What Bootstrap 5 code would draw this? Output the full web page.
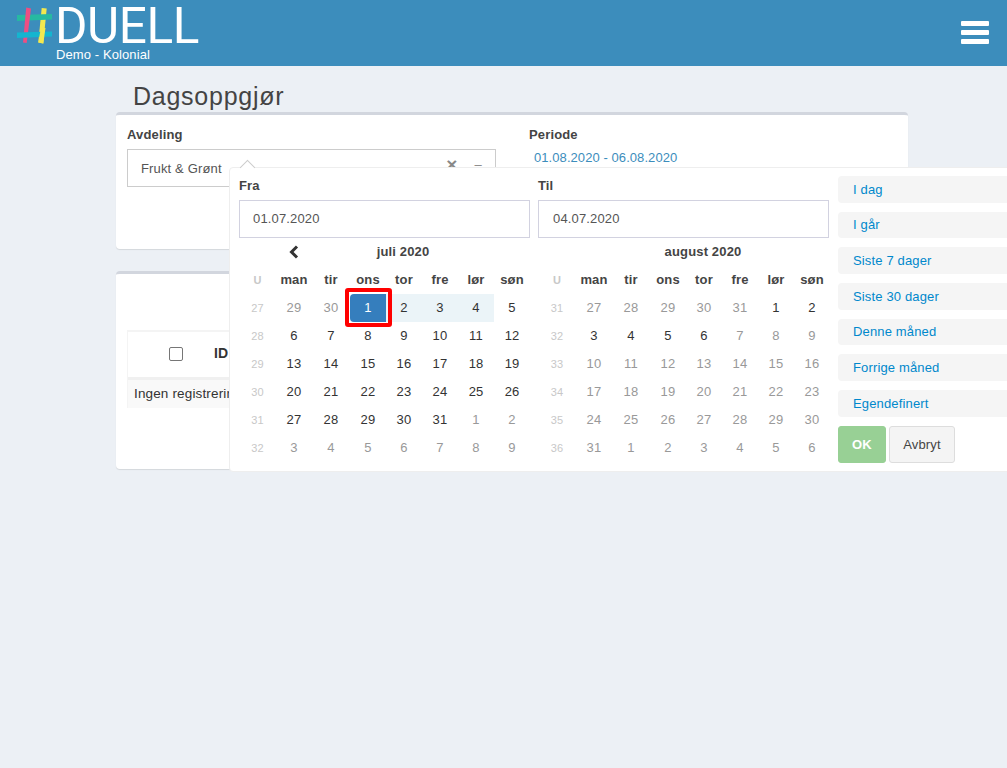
<!DOCTYPE html>
<html lang="no">
<head>
<meta charset="utf-8">
<title>Dagsoppgjør</title>
<link rel="stylesheet" href="https://cdn.jsdelivr.net/npm/bootstrap@5.3.0/dist/css/bootstrap.min.css">
<style>
html,body{height:100%;}
body{background:#ecf0f5;font-family:"Liberation Sans",Arial,sans-serif;font-size:13px;letter-spacing:.15px;color:#333;overflow:hidden;}
.topbar{height:66px;background:#3c8dbc;padding:0 18px 0 16px;position:relative;}
.brand{position:relative;width:200px;height:66px;color:#fff;}
.brand-mark{display:block;position:absolute;left:0;top:6px;}
.brand-name{position:absolute;left:39px;top:5px;font-family:Roboto,sans-serif;font-weight:400;font-size:49.5px;line-height:42px;letter-spacing:-.4px;}
.brand-sub{position:absolute;left:40px;top:47px;font-size:13px;line-height:16px;letter-spacing:.1px;font-weight:400;}
.burger{display:flex;flex-direction:column;gap:4px;width:28px;margin-bottom:2px;}
.burger span{display:block;height:5px;background:#fff;border-radius:1px;}
.pagewrap{width:792px;margin-left:116px;position:relative;}
.pagetitle{font-size:25px;line-height:30px;letter-spacing:.75px;margin:0;padding:15px 0 1px 17px;color:#444;font-weight:400;}
.boxcard{border:0;border-top:3px solid #d2d6de;border-radius:4px;background:#fff;box-shadow:0 1px 1px rgba(0,0,0,.1);}
.box-one{height:137px;margin-bottom:22px;padding:11px;}
.box-two{height:198px;padding:56px 11px 0;}
.fieldlabel{font-weight:700;line-height:18px;margin:0 0 5px;color:#444;}
.col-dept{width:369px;margin-right:33px;}
.fakeselect{height:38px;border:1px solid #ccc;padding:1px 13px 0;color:#555;}
.sel-x{font-weight:700;color:#888;font-size:19px;line-height:16px;margin-left:auto;margin-right:17px;margin-bottom:7px;}
.sel-dash{color:#888;margin-right:0;line-height:14px;margin-bottom:7px;}
.periodval{color:#3c8dbc;padding-left:5px;line-height:18px;letter-spacing:.07px;}
.regtable{width:100%;border-top:2px solid #f4f4f4;border-left:1px solid #f4f4f4;}
.reghead{height:48px;border-bottom:3px solid #f0f0f0;padding-left:41px;padding-bottom:2px;gap:31px;}
.reghead .form-check-input{width:14px;height:14px;margin:0;border-color:#767676;border-radius:2px;}
.reghead strong{font-size:14px;color:#333;}
.regrow{height:28px;background:#f9f9f9;padding-left:6px;font-size:13.5px;}
.picker{position:absolute;left:113px;top:101px;width:800px;height:305px;background:#fff;border:1px solid #eee;border-radius:4px;padding:0 0 0 9px;gap:8px;}
.picker::before{content:"";position:absolute;left:12px;top:-6px;width:11px;height:11px;background:#fff;border-left:1px solid #ccc;border-top:1px solid #ccc;transform:rotate(45deg);}
.calpane{width:291px;flex:none;}
.callabel{font-weight:700;line-height:16px;padding-top:10px;height:32px;margin:0;color:#444;}
.calinput.form-control{height:38px;width:291px;border:1px solid #d2d2e0;border-radius:0;padding:0 13px 2px;font-size:13px;letter-spacing:.15px;color:#555;}
.pane-two .calinput.form-control{padding-left:14px;}
.caltable{table-layout:fixed;width:291px;border-collapse:collapse;}
.pane-two .caltable{width:292px;}
.caltable td,.caltable th{height:28px;padding:0;text-align:center;font-weight:400;color:#333;}
.caltable .w1{width:37px;}.caltable .w2{width:36px;}.caltable .w3{width:38px;}
.pane-two .caltable .w1{width:38px;}
.caltable th{font-weight:700;color:#444;}
.caltable .wk{color:#c8c8c8;font-size:11px;}
.caltable th.wk{font-weight:700;}
.caltable .off{color:#999;}
.caltable .inrange{background:#ebf4f8;}
.caltable .active-day{background:#357ebd;color:#fff;border-radius:4px 0 0 4px;position:relative;}
.redmark{position:absolute;left:-5px;right:-6px;top:-6px;bottom:-5px;border:4px solid #f00;border-radius:3px;pointer-events:none;}
.prevbtn{display:block;margin:0 auto;}
.rangelist{width:220px;flex:none;margin-left:1px;padding-top:8px;}
.rangeitem{height:26.7px;margin-bottom:9px;background:#f5f5f5;border-radius:4px;color:#08c;padding-left:15px;display:flex;align-items:center;}
.rangebtns{gap:3px;margin-top:0;}
.okbtn.btn,.nobtn.btn{height:37px;font-size:13px;padding:0;border-radius:3px;letter-spacing:.15px;}
.okbtn.btn{width:48px;background:#98d095;border:1px solid #98d095;color:#fff;opacity:1;font-weight:700;}
.nobtn.btn{width:66px;background:#f4f4f4;border:1px solid #ddd;color:#444;}
</style>
</head>
<body>
<header class="topbar d-flex align-items-center justify-content-between">
  <div class="brand">
    <svg class="brand-mark" width="38" height="40" viewBox="0 0 38 40" aria-hidden="true">
      <polygon points="25.700,2 30.700,2.500 27.300,37.500 22.300,36.500" fill="#f3e84f"/>
      <polygon points="1,9 36,8 36,13.500 1,15" fill="#27b9a1"/>
      <polygon points="10.200,1.500 15,2.500 10.700,37 7,36.500" fill="#ec4f83"/>
      <polygon points="1,26.500 36,25.500 36,30.500 1,32" fill="#14b5cf"/>
      <polygon points="24.900,22 29.500,22 27.300,37.500 22.300,36.500" fill="#f3e84f"/>
    </svg>
    <div class="brand-name">DUELL</div>
    <div class="brand-sub">Demo - Kolonial</div>
  </div>
  <div class="burger"><span></span><span></span><span></span></div>
</header>

<main class="pagewrap">
  <h1 class="pagetitle">Dagsoppgjør</h1>
  <section class="card boxcard box-one">
    <div class="d-flex">
      <div class="col-dept">
        <div class="fieldlabel">Avdeling</div>
        <div class="fakeselect d-flex align-items-center"><span>Frukt &amp; Grønt</span><span class="sel-x">×</span><span class="sel-dash">–</span></div>
      </div>
      <div>
        <div class="fieldlabel">Periode</div>
        <div class="periodval">01.08.2020 - 06.08.2020</div>
      </div>
    </div>
  </section>
  <section class="card boxcard box-two">
    <div class="regtable">
      <div class="reghead d-flex align-items-center"><input class="form-check-input" type="checkbox" aria-label="Velg alle"><strong>ID</strong></div>
      <div class="regrow d-flex align-items-center">Ingen registreringer</div>
    </div>
  </section>

  <div class="picker d-flex">
    <div class="calpane">
      <div class="callabel">Fra</div>
      <input class="form-control calinput" value="01.07.2020" aria-label="Fra">
      <table class="caltable">
        <colgroup><col class="w1"><col class="w2"><col class="w3"><col class="w2"><col class="w2"><col class="w2"><col class="w2"><col class="w2"></colgroup>
        <tr><th></th><th><svg class="prevbtn" width="10" height="14" viewBox="0 0 10 14"><polyline points="8,1.500 2.500,7 8,12.500" fill="none" stroke="#333" stroke-width="3"/></svg></th><th colspan="5">juli 2020</th><th></th></tr>
        <tr><th class="wk">U</th><th>man</th><th>tir</th><th>ons</th><th>tor</th><th>fre</th><th>lør</th><th>søn</th></tr>
        <tr><td class="wk">27</td><td class="off">29</td><td class="off">30</td><td class="active-day">1<span class="redmark"></span></td><td class="inrange">2</td><td class="inrange">3</td><td class="inrange">4</td><td>5</td></tr>
        <tr><td class="wk">28</td><td>6</td><td>7</td><td>8</td><td>9</td><td>10</td><td>11</td><td>12</td></tr>
        <tr><td class="wk">29</td><td>13</td><td>14</td><td>15</td><td>16</td><td>17</td><td>18</td><td>19</td></tr>
        <tr><td class="wk">30</td><td>20</td><td>21</td><td>22</td><td>23</td><td>24</td><td>25</td><td>26</td></tr>
        <tr><td class="wk">31</td><td>27</td><td>28</td><td>29</td><td>30</td><td>31</td><td class="off">1</td><td class="off">2</td></tr>
        <tr><td class="wk">32</td><td class="off">3</td><td class="off">4</td><td class="off">5</td><td class="off">6</td><td class="off">7</td><td class="off">8</td><td class="off">9</td></tr>
      </table>
    </div>
    <div class="calpane pane-two">
      <div class="callabel">Til</div>
      <input class="form-control calinput" value="04.07.2020" aria-label="Til">
      <table class="caltable">
        <colgroup><col class="w1"><col class="w2"><col class="w3"><col class="w2"><col class="w2"><col class="w2"><col class="w2"><col class="w2"></colgroup>
        <tr><th></th><th></th><th colspan="5">august 2020</th><th></th></tr>
        <tr><th class="wk">U</th><th>man</th><th>tir</th><th>ons</th><th>tor</th><th>fre</th><th>lør</th><th>søn</th></tr>
        <tr><td class="wk">31</td><td class="off">27</td><td class="off">28</td><td class="off">29</td><td class="off">30</td><td class="off">31</td><td>1</td><td>2</td></tr>
        <tr><td class="wk">32</td><td>3</td><td>4</td><td>5</td><td>6</td><td class="off">7</td><td class="off">8</td><td class="off">9</td></tr>
        <tr><td class="wk">33</td><td class="off">10</td><td class="off">11</td><td class="off">12</td><td class="off">13</td><td class="off">14</td><td class="off">15</td><td class="off">16</td></tr>
        <tr><td class="wk">34</td><td class="off">17</td><td class="off">18</td><td class="off">19</td><td class="off">20</td><td class="off">21</td><td class="off">22</td><td class="off">23</td></tr>
        <tr><td class="wk">35</td><td class="off">24</td><td class="off">25</td><td class="off">26</td><td class="off">27</td><td class="off">28</td><td class="off">29</td><td class="off">30</td></tr>
        <tr><td class="wk">36</td><td class="off">31</td><td class="off">1</td><td class="off">2</td><td class="off">3</td><td class="off">4</td><td class="off">5</td><td class="off">6</td></tr>
      </table>
    </div>
    <div class="rangelist">
      <div class="rangeitem">I dag</div>
      <div class="rangeitem">I går</div>
      <div class="rangeitem">Siste 7 dager</div>
      <div class="rangeitem">Siste 30 dager</div>
      <div class="rangeitem">Denne måned</div>
      <div class="rangeitem">Forrige måned</div>
      <div class="rangeitem">Egendefinert</div>
      <div class="rangebtns d-flex">
        <button type="button" class="btn okbtn">OK</button>
        <button type="button" class="btn nobtn">Avbryt</button>
      </div>
    </div>
  </div>
</main>
<script src="https://cdn.jsdelivr.net/npm/bootstrap@5.3.0/dist/js/bootstrap.bundle.min.js"></script>
</body>
</html>
